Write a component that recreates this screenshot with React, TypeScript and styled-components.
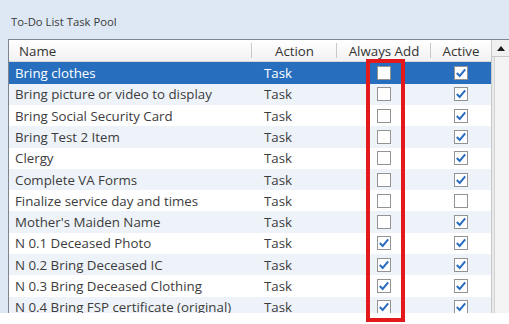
import { FC } from "react"
import styled, { createGlobalStyle } from "styled-components"

type Task = { name: string; always: boolean; active: boolean }

const tasks: Task[] = [
  { name: "Bring clothes", always: false, active: true },
  { name: "Bring picture or video to display", always: false, active: true },
  { name: "Bring Social Security Card", always: false, active: true },
  { name: "Bring Test 2 Item", always: false, active: true },
  { name: "Clergy", always: false, active: true },
  { name: "Complete VA Forms", always: false, active: true },
  { name: "Finalize service day and times", always: false, active: false },
  { name: "Mother's Maiden Name", always: false, active: true },
  { name: "N 0.1 Deceased Photo", always: true, active: true },
  { name: "N 0.2 Bring Deceased IC", always: true, active: true },
  { name: "N 0.3 Bring Deceased Clothing", always: true, active: true },
  { name: "N 0.4 Bring FSP certificate (original)", always: true, active: true },
]

const GlobalStyle = createGlobalStyle`
  html, body {
    margin: 0;
    padding: 0;
    background: #ffffff;
  }
  body {
    font-family: "Open Sans", "Liberation Sans", sans-serif;
    width: 509px;
    height: 324px;
    overflow: hidden;
  }
`

const Check: FC<{ checked: boolean }> = ({ checked }) => (
  <CheckBox>
    {checked && (
      <svg width="12" height="12" viewBox="0 0 12 12">
        <path d="M1.8 6 L4.7 9 L10.2 2.4" fill="none" stroke="#2a6dc0" strokeWidth="2" />
      </svg>
    )}
  </CheckBox>
)

const App: FC = (): JSX.Element => {
  return (
    <>
      <GlobalStyle />
      <Panel>
        <Title>To-Do List Task Pool</Title>

        <GridFrame>
          <Table>
            <HeaderCell $align="left">Name</HeaderCell>
            <HeaderCell $align="center">Action</HeaderCell>
            <HeaderCell $align="center">Always Add</HeaderCell>
            <HeaderCell $align="center" $last>
              Active
            </HeaderCell>

            {tasks.map((t, i) => (
              <Row key={t.name} $selected={i === 0} $tinted={i % 2 === 1}>
                <NameCell>{t.name}</NameCell>
                <ActionCell>Task</ActionCell>
                <CheckCell>
                  <Check checked={t.always} />
                </CheckCell>
                <CheckCell>
                  <Check checked={t.active} />
                </CheckCell>
              </Row>
            ))}
          </Table>

          <ScrollBar>
            <ScrollButton>
              <svg width="8" height="5" viewBox="0 0 8 5">
                <path d="M0 5 L4 0 L8 5 Z" fill="#1a1a1a" />
              </svg>
            </ScrollButton>
            <ScrollThumb />
          </ScrollBar>
        </GridFrame>

        <Highlight />
      </Panel>
    </>
  )
}

const Panel = styled.div`
  position: relative;
  height: 313px;
  background-color: #dde8f4;
  display: flex;
  flex-direction: column;
`

const Title = styled.div`
  height: 39px;
  padding-left: 11px;
  display: flex;
  align-items: center;
  padding-top: 4px;
  box-sizing: border-box;
  font-size: 11.3px;
  color: #3a3a3a;
`

const GridFrame = styled.div`
  flex: 1;
  margin-left: 8px;
  border-left: 1px solid #7f858c;
  border-top: 1px solid #7f858c;
  display: flex;
  overflow: hidden;
  background: #ffffff;
`

const Table = styled.div`
  display: grid;
  grid-template-columns: 243px 85px 94px 60px;
  grid-auto-rows: 21.3px;
  grid-template-rows: 22.4px;
  align-content: start;
`

const HeaderCell = styled.div<{ $align: "left" | "center"; $last?: boolean }>`
  position: relative;
  display: flex;
  align-items: center;
  justify-content: ${(p) => (p.$align === "left" ? "flex-start" : "center")};
  padding-left: ${(p) => (p.$align === "left" ? "10px" : "0")};
  font-size: 13.3px;
  color: #333333;
  background: linear-gradient(#ffffff, #f2f2f2);
  border-bottom: 1px solid #d9d9d9;

  &::after {
    content: "";
    display: ${(p) => (p.$last ? "none" : "block")};
    position: absolute;
    right: 0;
    top: 3px;
    bottom: 3px;
    width: 1px;
    background: #c8c8c8;
  }
`

const Row = styled.div<{ $selected: boolean; $tinted: boolean }>`
  display: contents;

  > div {
    background-color: ${(p) => (p.$selected ? "#276fbe" : p.$tinted ? "#eef3f9" : "#ffffff")};
    color: ${(p) => (p.$selected ? "#ffffff" : "#3c3c3c")};
  }
`

const NameCell = styled.div`
  display: flex;
  align-items: center;
  padding-left: 6px;
  font-size: 13.3px;
  white-space: nowrap;
  overflow: hidden;
`

const ActionCell = styled.div`
  display: flex;
  align-items: center;
  padding-left: 12px;
  font-size: 13.3px;
`

const CheckCell = styled.div`
  display: flex;
  align-items: center;
  justify-content: center;
`

const CheckBox = styled.span`
  width: 14px;
  height: 14px;
  box-sizing: border-box;
  border: 1px solid #939393;
  background: #ffffff;
  display: grid;
  place-items: center;
`

const ScrollBar = styled.div`
  width: 18px;
  flex-shrink: 0;
  display: flex;
  flex-direction: column;
  border-left: 1px solid #c9c9c9;
  background: #e9e9e9;
`

const ScrollButton = styled.div`
  height: 16px;
  display: grid;
  place-items: center;
  background: #f0f0f0;
  border-bottom: 1px solid #c9c9c9;
`

const ScrollThumb = styled.div`
  flex: 1;
  margin-left: 2px;
  background: #f4f4f4;
  border-left: 1px solid #d4d4d4;
  border-right: 1px solid #a0a0a0;
`

const Highlight = styled.div`
  position: absolute;
  left: 366px;
  top: 59px;
  width: 39px;
  height: 263px;
  box-sizing: border-box;
  border: 4px solid #e3191c;
  pointer-events: none;
`

export default App
